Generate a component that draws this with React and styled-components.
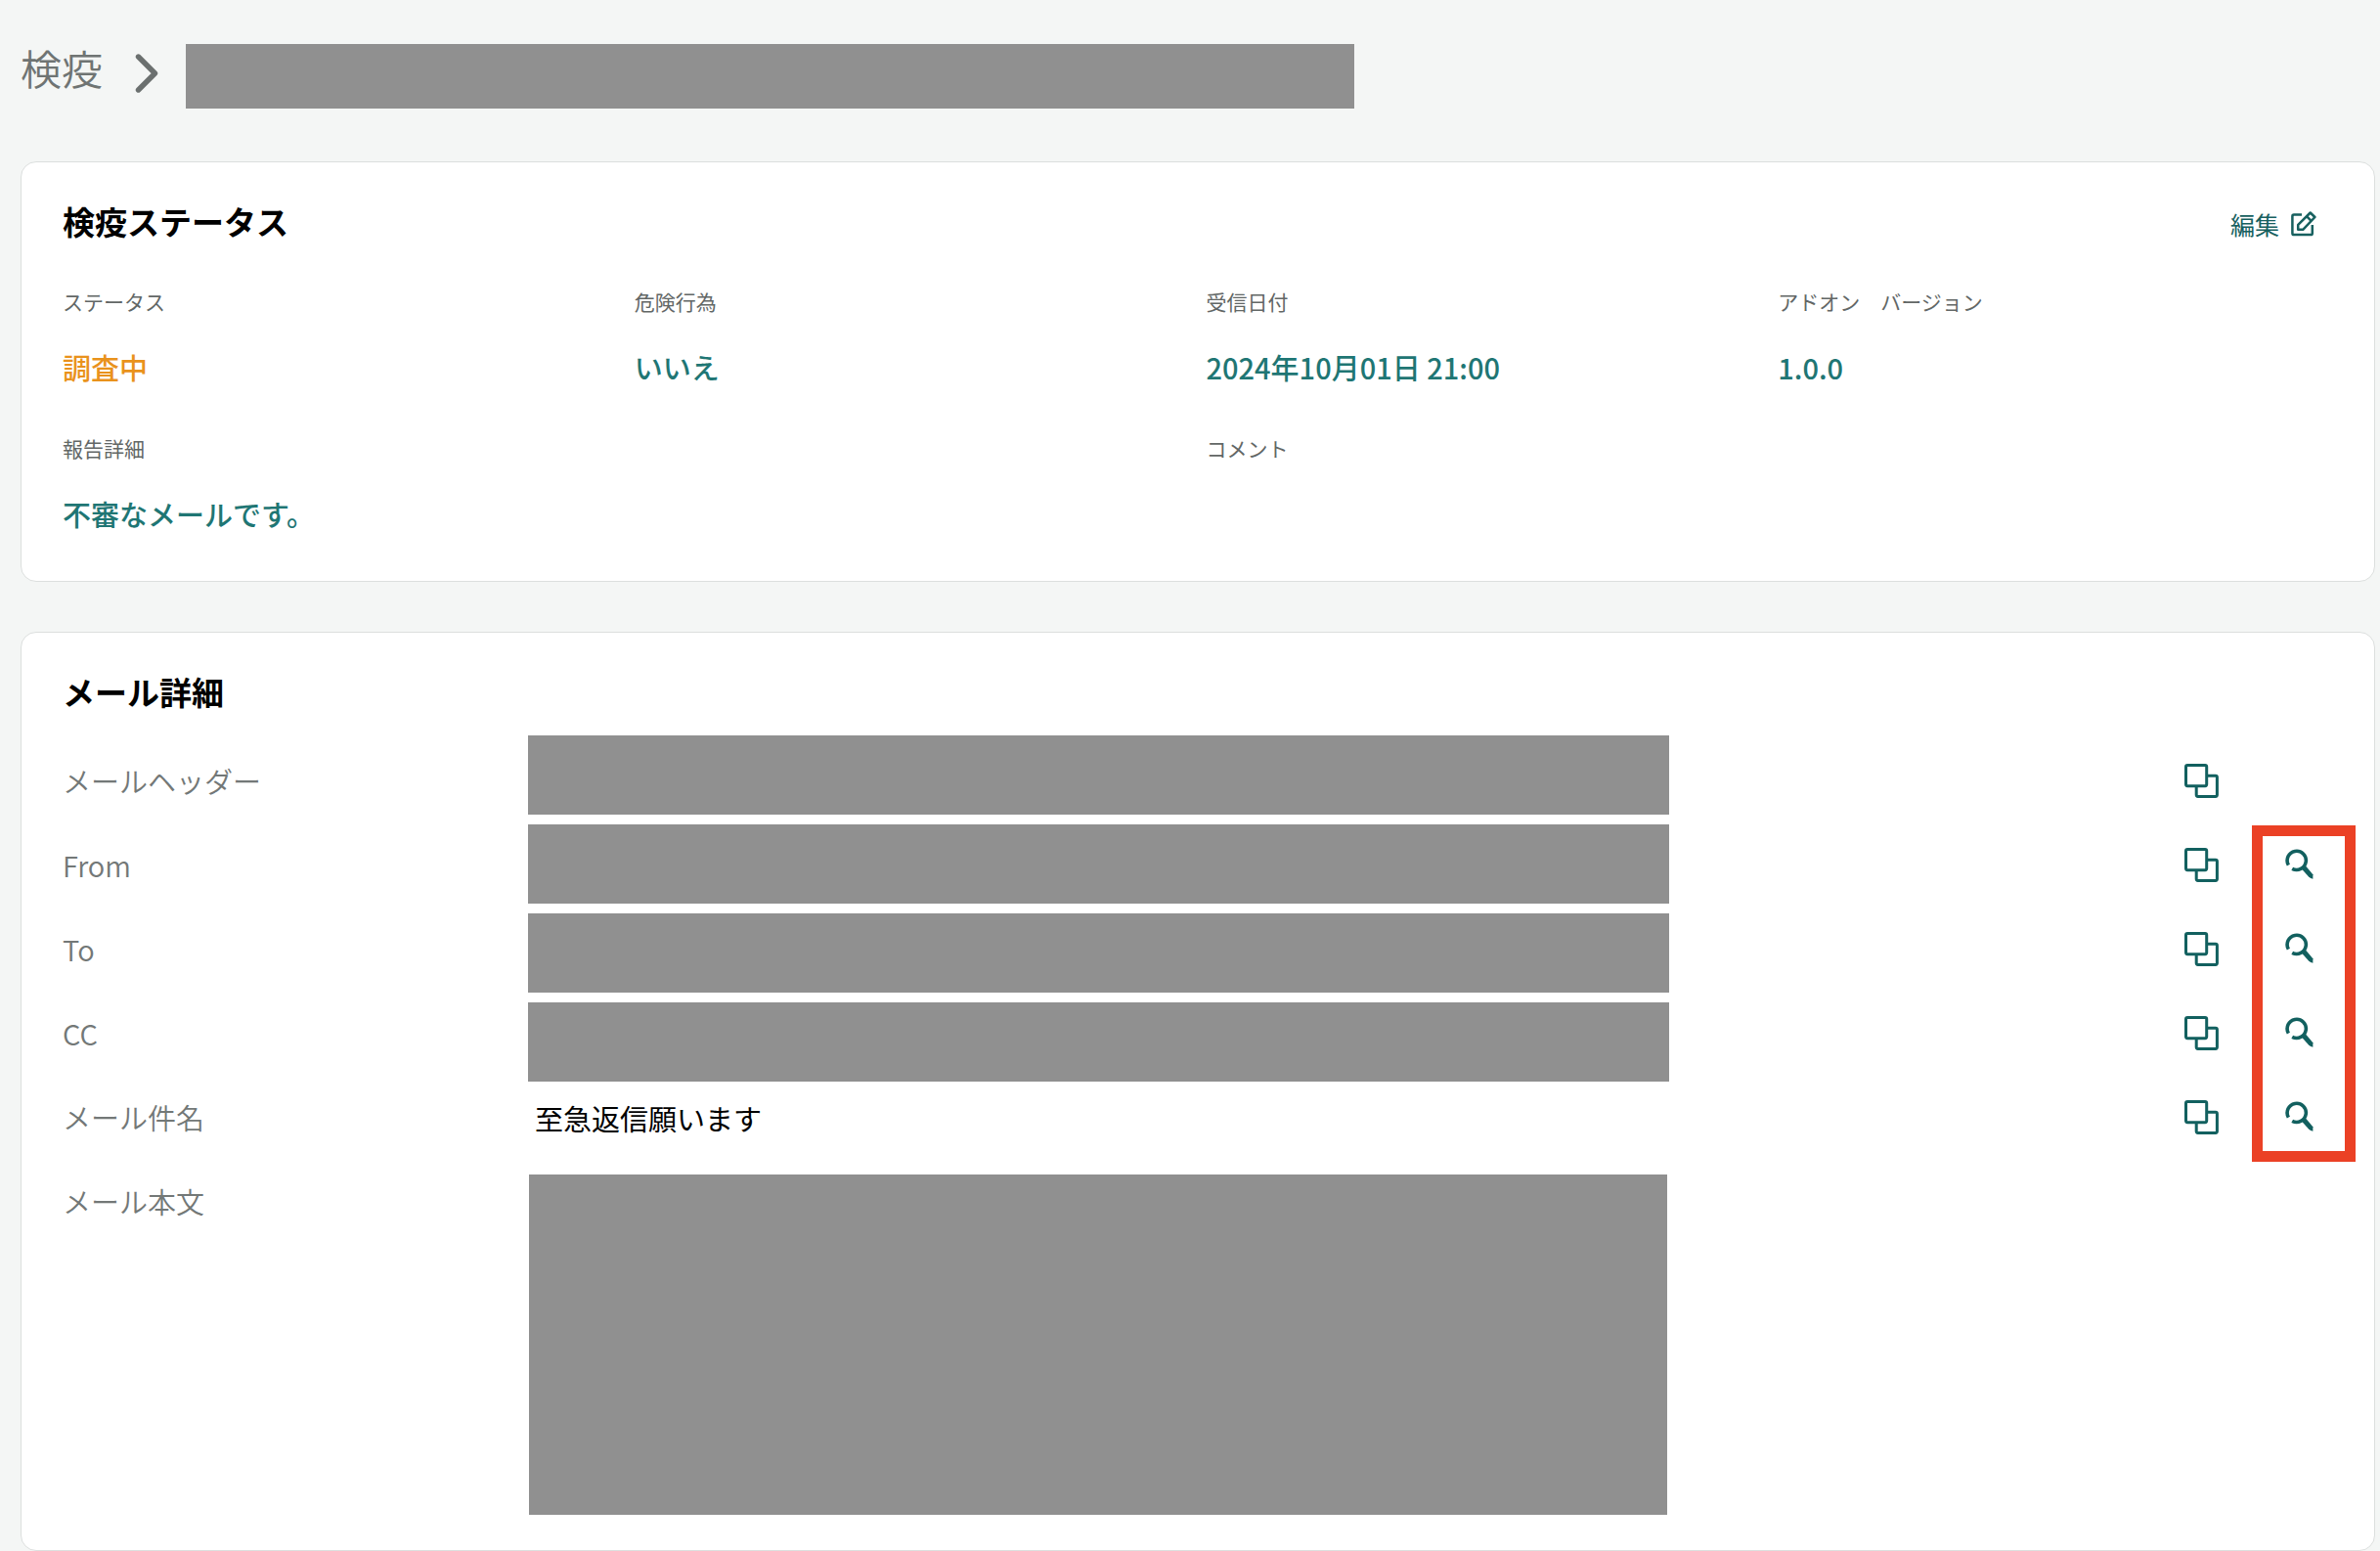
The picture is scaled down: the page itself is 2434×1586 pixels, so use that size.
import React from 'react';
import styled, {createGlobalStyle} from 'styled-components';

const GlobalStyle = createGlobalStyle`
* {
  box-sizing: border-box;
}

body {
  margin: 0;
  background-color: #f4f6f5;
  color: #000;
  font-family: "Noto Sans CJK JP", "Noto Sans", sans-serif;
}
`;

const Page = styled.main`
  padding: 45px 5px 0 21px;
`;

const Breadcrumb = styled.nav`
  display: flex;
  align-items: flex-start;
  margin-bottom: 54px;
`;

const BreadcrumbLink = styled.a`
  color: #6f7473;
  font-size: 42px;
  font-weight: 350;
  line-height: 48px;
  text-decoration: none;
  white-space: nowrap;
`;

const Chevron = styled.svg`
  flex: none;
  width: 24px;
  height: 60px;
  margin: 0 28px 0 33px;
`;

const Redacted = styled.div`
  width: 100%;
  height: ${props => props.$height}px;
  background-color: #909090;
`;

const BreadcrumbTarget = styled.div`
  width: 50%;
  max-width: 1195px;
`;

const Card = styled.section`
  margin-bottom: ${props => props.$gap || 0}px;
  padding: 36px 19px ${props => props.$bottom}px 42px;
  background-color: #fff;
  border: 1px solid #dcdfde;
  border-radius: 16px;
`;

const CardHeader = styled.div`
  display: flex;
  justify-content: space-between;
  align-items: center;
  padding-right: 40px;
`;

const CardTitle = styled.h2`
  margin: 0;
  font-size: 33px;
  font-weight: 700;
  line-height: 48px;
`;

const EditButton = styled.button`
  display: flex;
  align-items: center;
  gap: 12px;
  padding: 6px 0 0;
  background: none;
  border: none;
  color: #17605f;
  font-family: inherit;
  font-size: 25px;
  line-height: 36px;
  cursor: pointer;

  svg {
    width: 26px;
    height: 26px;
  }
`;

const StatusGrid = styled.dl`
  display: grid;
  grid-template-columns: repeat(4, 1fr);
  row-gap: 45px;
  margin: 42px 6px 0 0;
`;

const StatusItem = styled.div`
  grid-column: span ${props => props.$span || 1};
`;

const StatusLabel = styled.dt`
  margin-bottom: 29px;
  color: #626766;
  font-size: 21px;
  line-height: 32px;
`;

const StatusValue = styled.dd`
  min-height: 44px;
  margin: 0;
  color: ${props => (props.$warning ? '#e9921c' : '#1f7674')};
  font-size: 29px;
  font-weight: 500;
  line-height: 44px;
`;

const MailGrid = styled.div`
  display: grid;
  grid-template-columns: 476fr 1167fr 702fr;
  margin-top: 21px;
`;

const MailLabels = styled.div`
  padding-top: 3px;
`;

const MailLabel = styled.div`
  color: #737877;
  font-size: 29px;
  font-weight: 350;
  line-height: 86px;
`;

const MailValues = styled.div`
  display: flex;
  flex-direction: column;
  gap: 10px;
`;

const Subject = styled.div`
  padding: 0 0 21px 7px;
  font-size: 29px;
  line-height: 54px;
`;

const MailBody = styled.div`
  padding: 0 2px 0 1px;
`;

const Actions = styled.div`
  position: relative;
  padding-top: 3px;
`;

const ActionRow = styled.div`
  display: grid;
  grid-template-columns: 87px 114px;
  justify-content: end;
  align-items: center;
  height: 86px;
`;

const IconButton = styled.button`
  display: flex;
  justify-content: center;
  padding: 0;
  background: none;
  border: none;
  color: #12605f;
  cursor: pointer;
`;

// 検索ボタンの強調枠
const Highlight = styled.div`
  position: absolute;
  top: 92px;
  right: 0;
  width: 106px;
  height: 344px;
  border: 11px solid #eb4125;
  pointer-events: none;
`;

const EditIcon = () => (
  <svg viewBox="0 0 26 26" fill="none" stroke="currentColor" strokeWidth="2.5" strokeLinejoin="round">
    <path d="M11 3.6H3Q1.4 3.6 1.4 5.2V22.4Q1.4 24 3 24H20.2Q21.8 24 21.8 22.4V14" />
    <path d="M7.2 18.8V13.8L19.7 1.5L24.4 6L12.2 18.8Z" />
    <path d="M16 5.2L20.6 9.8" />
  </svg>
);

const CopyIcon = () => (
  <svg width="35" height="35" viewBox="0 0 35 35" fill="none" stroke="currentColor" strokeWidth="3">
    <rect x="1.5" y="1.5" width="21.2" height="21.2" rx="1.6" />
    <path d="M23 12.2H31.8Q33.4 12.2 33.4 13.8V31.8Q33.4 33.4 31.8 33.4H13.8Q12.2 33.4 12.2 31.8V23" />
  </svg>
);

const SearchIcon = () => (
  <svg width="30" height="32" viewBox="0 0 30 32">
    <path
      d="M3.4 16.6A9.6 9.6 0 1 1 7.2 20.3"
      fill="none"
      stroke="currentColor"
      strokeWidth="3.6"
    />
    <path d="M16.2 19.8L20.2 16.6L28.4 26.2V30.8Q26 30.4 24 28.4Z" fill="currentColor" />
  </svg>
);

const statusItems = [
  {label: 'ステータス', value: '調査中', warning: true},
  {label: '危険行為', value: 'いいえ'},
  {label: '受信日付', value: '2024年10月01日 21:00'},
  {label: 'アドオン　バージョン', value: '1.0.0'},
  {label: '報告詳細', value: '不審なメールです。', span: 2},
  {label: 'コメント', value: '', span: 2},
];

const mailFields = [
  {label: 'メールヘッダー', copy: true},
  {label: 'From', copy: true, search: true},
  {label: 'To', copy: true, search: true},
  {label: 'CC', copy: true, search: true},
  {label: 'メール件名', copy: true, search: true},
  {label: 'メール本文'},
];

const StatusCard = () => {
  return (
    <Card $gap={51} $bottom={47}>
      <CardHeader>
        <CardTitle>検疫ステータス</CardTitle>
        <EditButton type="button">
          編集
          <EditIcon />
        </EditButton>
      </CardHeader>
      <StatusGrid>
        {statusItems.map(item => (
          <StatusItem key={item.label} $span={item.span}>
            <StatusLabel>{item.label}</StatusLabel>
            <StatusValue $warning={item.warning}>{item.value}</StatusValue>
          </StatusItem>
        ))}
      </StatusGrid>
    </Card>
  );
};

const MailCard = () => {
  return (
    <Card $bottom={36}>
      <CardTitle>メール詳細</CardTitle>
      <MailGrid>
        <MailLabels>
          {mailFields.map(field => (
            <MailLabel key={field.label}>{field.label}</MailLabel>
          ))}
        </MailLabels>
        <MailValues>
          <Redacted $height={81} />
          <Redacted $height={81} />
          <Redacted $height={81} />
          <Redacted $height={81} />
          <Subject>至急返信願います</Subject>
          <MailBody>
            <Redacted $height={348} />
          </MailBody>
        </MailValues>
        <Actions>
          {mailFields
            .filter(field => field.copy)
            .map(field => (
              <ActionRow key={field.label}>
                <IconButton type="button" aria-label={`${field.label}をコピー`}>
                  <CopyIcon />
                </IconButton>
                {field.search && (
                  <IconButton type="button" aria-label={`${field.label}で検索`}>
                    <SearchIcon />
                  </IconButton>
                )}
              </ActionRow>
            ))}
          <Highlight />
        </Actions>
      </MailGrid>
    </Card>
  );
};

const App = () => {
  return (
    <>
      <GlobalStyle />
      <Page>
        <Breadcrumb>
          <BreadcrumbLink href="#">検疫</BreadcrumbLink>
          <Chevron viewBox="0 0 24 60" fill="none" stroke="#6b706f" strokeWidth="5.4">
            <path d="M3.5 13L20.5 30L3.5 47" strokeLinecap="round" strokeLinejoin="round" />
          </Chevron>
          <BreadcrumbTarget>
            <Redacted $height={66} />
          </BreadcrumbTarget>
        </Breadcrumb>
        <StatusCard />
        <MailCard />
      </Page>
    </>
  );
};

export default App;
